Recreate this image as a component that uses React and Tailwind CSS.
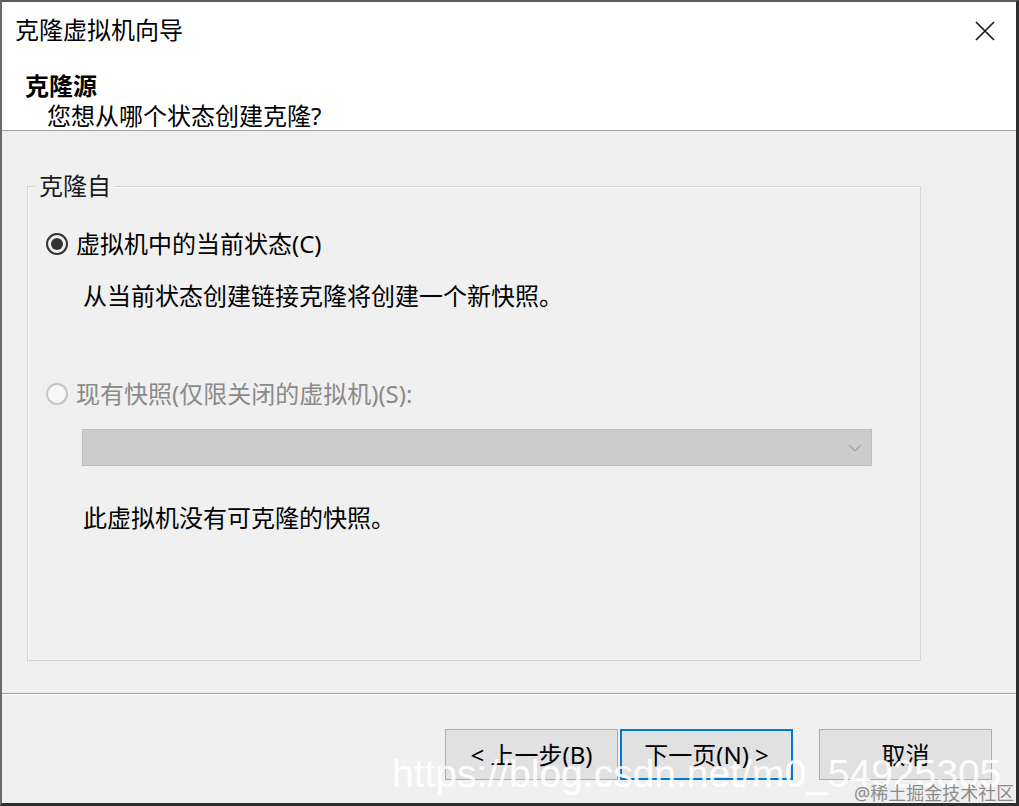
import React from "react";

// VMware "克隆虚拟机向导" dialog — clone source step.
const font = "font-['Noto_Sans','Noto_Sans_CJK_SC',sans-serif]";

function Radio({ checked, disabled }) {
  if (disabled) {
    return (
      <span className="w-[22px] h-[22px] rounded-full border-2 border-[#c6c6c6] bg-[#f7f7f7] shrink-0" />
    );
  }
  return (
    <span className="w-[22px] h-[22px] rounded-full border-2 border-[#333] bg-[#f0f0f0] flex items-center justify-center shrink-0">
      {checked && <span className="w-[12px] h-[12px] rounded-full bg-[#333]" />}
    </span>
  );
}

function Button({ children, focused, className = "" }) {
  return (
    <div
      className={`w-[173px] h-[51px] bg-[#e1e1e1] flex items-center justify-center text-[24px] leading-[30px] text-black ${
        focused ? "border-2 border-[#0078d7]" : "border border-[#adadad]"
      } ${className}`}
    >
      {children}
    </div>
  );
}

export default function App() {
  return (
    <div
      className={`relative w-[1019px] h-[806px] overflow-hidden flex flex-col bg-[#f0f0f0] border-t-2 border-l-2 border-t-[#5a5a5a] border-l-[#6a6a6a] border-r-[3px] border-b-[3px] border-r-[#2e2e2e] border-b-[#2e2e2e] ${font}`}
    >
      {/* Header */}
      <div className="bg-white h-[129px] border-b border-[#a0a0a0] shrink-0">
        <div className="flex items-start justify-between pt-[12px] pl-[13px] pr-[20px]">
          <div className="text-[24px] leading-[32px] text-black">克隆虚拟机向导</div>
          <svg width="22" height="22" viewBox="0 0 22 22" className="mt-[6px]">
            <path d="M2 2 L20 20 M20 2 L2 20" stroke="#1a1a1a" strokeWidth="1.7" fill="none" />
          </svg>
        </div>
        <div className="mt-[25px] pl-[23px] text-[24px] leading-[30px] font-bold text-black">克隆源</div>
        <div className="mt-px pl-[45px] text-[24px] leading-[28px] text-black">您想从哪个状态创建克隆?</div>
      </div>

      {/* Body */}
      <div className="h-[562px] shrink-0 pt-[55px] pl-[25px]">
        <div className="relative w-[894px] h-[475px] border border-[#d6d6d6] shadow-[inset_1px_1px_0_#fafafa] pt-[42px] pl-[18px]">
          <div className="absolute -top-[16px] left-[8px] px-[3px] bg-[#f0f0f0] text-[24px] leading-[30px] text-[#1a1a1a]">
            克隆自
          </div>

          <div className="flex items-center gap-[8px] h-[30px]">
            <Radio checked />
            <span className="text-[24px] leading-[30px] text-black">虚拟机中的当前状态(C)</span>
          </div>
          <div className="mt-[22px] ml-[37px] text-[24px] leading-[30px] text-black">
            从当前状态创建链接克隆将创建一个新快照。
          </div>

          <div className="mt-[68px] flex items-center gap-[8px] h-[30px]">
            <Radio disabled />
            <span className="text-[24px] leading-[30px] text-[#8a8a8a]">现有快照(仅限关闭的虚拟机)(S):</span>
          </div>
          <div className="mt-[20px] ml-[36px] w-[790px] h-[37px] bg-[#cccccc] border border-[#bdbdbd] flex items-center justify-end pr-[9px]">
            <svg width="14" height="8" viewBox="0 0 14 8">
              <path d="M1 1 L7 7 L13 1" stroke="#a3a3a3" strokeWidth="1.2" fill="none" />
            </svg>
          </div>
          <div className="mt-[37px] ml-[37px] text-[24px] leading-[30px] text-black">
            此虚拟机没有可克隆的快照。
          </div>
        </div>
      </div>

      {/* Separator */}
      <div className="h-px bg-[#a0a0a0] shrink-0" />
      <div className="h-px bg-white shrink-0" />

      {/* Footer */}
      <div className="flex-1 flex justify-end items-start pt-[34px] pr-[24px]">
        <Button>&lt; 上一步(B)</Button>
        <Button focused className="ml-[2px]">下一页(N) &gt;</Button>
        <Button className="ml-[26px]">取消</Button>
      </div>

      {/* Watermarks over the screenshot */}
      <div className="absolute left-[390px] top-[752px] text-[39px] leading-[40px] text-white/90 font-['Liberation_Sans',Arial,sans-serif] whitespace-nowrap pointer-events-none">
        https://blog.csdn.net/m0_54925305
      </div>
      <div className="absolute left-[852px] top-[780px] text-[18px] leading-[22px] text-[#8c8c8c] whitespace-nowrap pointer-events-none">
        @稀土掘金技术社区
      </div>
    </div>
  );
}
